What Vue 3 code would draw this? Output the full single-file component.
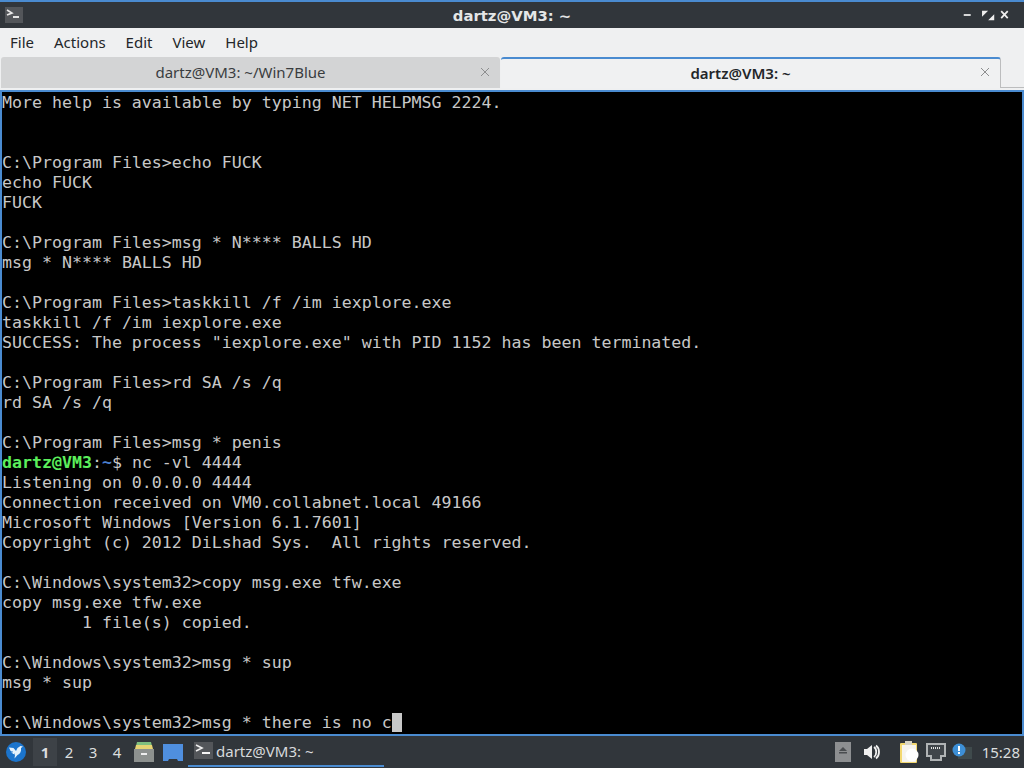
<script setup>
const before = [
  'More help is available by typing NET HELPMSG 2224.', '', '',
  'C:\\Program Files>echo FUCK', 'echo FUCK', 'FUCK', '',
  'C:\\Program Files>msg * N**** BALLS HD', 'msg * N**** BALLS HD', '',
  'C:\\Program Files>taskkill /f /im iexplore.exe', 'taskkill /f /im iexplore.exe',
  'SUCCESS: The process "iexplore.exe" with PID 1152 has been terminated.', '',
  'C:\\Program Files>rd SA /s /q', 'rd SA /s /q', '',
  'C:\\Program Files>msg * penis'
]
const after = [
  'Listening on 0.0.0.0 4444',
  'Connection received on VM0.collabnet.local 49166',
  'Microsoft Windows [Version 6.1.7601]',
  'Copyright (c) 2012 DiLshad Sys.  All rights reserved.', '',
  'C:\\Windows\\system32>copy msg.exe tfw.exe', 'copy msg.exe tfw.exe',
  '        1 file(s) copied.', '',
  'C:\\Windows\\system32>msg * sup', 'msg * sup', ''
]
const menus = ['File', 'Actions', 'Edit', 'View', 'Help']
const desktops = ['1', '2', '3', '4']
</script>

<template>
  <div class="window">
    <header class="titlebar">
      <div class="title-left">
        <div class="app-icon">
          <svg width="16" height="14" viewBox="0 0 16 14"><path d="M1 2l5 3-5 2" fill="none" stroke="#e8e8e8" stroke-width="1.6"/><path d="M7 9h6" stroke="#f4f4f4" stroke-width="1.8"/></svg>
        </div>
      </div>
      <div class="title">dartz@VM3: ~</div>
      <div class="controls">
        <svg width="62" height="16" viewBox="0 0 62 16">
          <path d="M2 8h8" stroke="#eee" stroke-width="2"/>
          <path d="M23 3h7l-7 7zM37 14h-7l7-7z" fill="#eee"/>
          <path d="M45 3.500l7.500 8M52.500 3.500l-7.500 8" stroke="#eee" stroke-width="2"/>
        </svg>
      </div>
    </header>

    <nav class="menubar">
      <span v-for="m in menus" :key="m" class="menu">{{ m }}</span>
    </nav>

    <div class="tabs">
      <div class="tab inactive">
        <span class="tab-label">dartz@VM3: ~/Win7Blue</span>
        <svg class="tab-x" width="10" height="10" viewBox="0 0 10 10"><path d="M1 1l8 8M9 1l-8 8" stroke="#8d8e8f" stroke-width="1"/></svg>
      </div>
      <div class="tab active">
        <span class="tab-label">dartz@VM3: ~</span>
        <svg class="tab-x" width="10" height="10" viewBox="0 0 10 10"><path d="M1 1l8 8M9 1l-8 8" stroke="#8d8e8f" stroke-width="1"/></svg>
      </div>
      <div class="tab-rest"></div>
    </div>

    <main class="terminal">
      <div v-for="(l, i) in before" :key="'b' + i" class="line">{{ l }}</div>
      <div class="line"><span class="green">dartz@VM3</span><span>:</span><span class="blue">~</span>$ nc -vl 4444</div>
      <div v-for="(l, i) in after" :key="'a' + i" class="line">{{ l }}</div>
      <div class="line">C:\Windows\system32&gt;msg * there is no c<span class="cursor"></span></div>
    </main>

    <footer class="taskbar">
      <div class="start">
        <svg width="20" height="20" viewBox="0 0 20 20">
          <circle cx="10" cy="10" r="10" fill="#1b74cc"/>
          <path d="M3 5.500l4.500.5 2.500 3 1.500-3 3-2 2.500.5-2 1.500c.5 3.500-1 6-3.500 7l-3 3.500.5-3.500C6.500 12 4.500 9.500 3 5.500z" fill="#e4f1fb"/>
          <path d="M4 9.500l3 .5M6 13l3-1" stroke="#1b74cc" stroke-width=".8"/>
        </svg>
      </div>
      <div class="desktops">
        <span v-for="(d, i) in desktops" :key="d" class="desk" :class="{ current: i === 0 }">{{ d }}</span>
      </div>
      <svg class="launcher" width="22" height="22" viewBox="0 0 22 22">
        <path d="M4 1h14l1 4H3z" fill="#7fbf7f"/>
        <path d="M3 4h16l1 4H2z" fill="#e6d473"/>
        <rect x="1" y="8" width="20" height="13" fill="#8d918f"/>
        <rect x="8" y="12" width="6" height="2" fill="#eee"/>
      </svg>
      <svg class="launcher desk-icon" width="20" height="17" viewBox="0 0 20 17">
        <path d="M0 0h20v17h-5l-1-2H6l-1 2H0z" fill="#4f8fdf"/>
      </svg>
      <div class="task">
        <div class="task-icon">
          <svg width="19" height="17" viewBox="0 0 19 17"><path d="M2 3l6 3-6 3" fill="none" stroke="#eee" stroke-width="1.600"/><path d="M8 11h8" stroke="#f4f4f4" stroke-width="2"/></svg>
        </div>
        <span class="task-label">dartz@VM3: ~</span>
      </div>
      <div class="spacer"></div>
      <div class="tray">
        <div class="eject">
          <svg width="16" height="20" viewBox="0 0 16 20"><path d="M8 5l4 4H4z" fill="#4a4d50"/><rect x="4" y="10" width="8" height="1.500" fill="#4a4d50"/></svg>
        </div>
        <svg class="vol" width="18" height="16" viewBox="0 0 18 16">
          <path d="M1 5h3l5-4v14l-5-4H1z" fill="#f0f0f0"/>
          <path d="M11 3c3 2 3 8 0 10M13 1.500c4 3 4 10 0 13" fill="none" stroke="#f0f0f0" stroke-width="1.800"/>
        </svg>
        <svg class="clip" width="20" height="24" viewBox="0 0 20 24">
          <rect x="1" y="3" width="17" height="20" rx="1" fill="#f3d870"/>
          <rect x="3" y="5" width="14" height="17" fill="#f6f4ee"/>
          <rect x="6" y="1" width="7" height="4" fill="#d8d4c4"/>
          <circle cx="13" cy="15" r="6.500" fill="#fff"/>
        </svg>
        <svg class="net" width="20" height="18" viewBox="0 0 20 18">
          <path d="M1 1h18v12h-4v4H5v-4H1z" fill="#40454a" stroke="#b0b3b5" stroke-width="2"/>
          <path d="M5 5h10" stroke="#e4e4e4" stroke-width="2" stroke-dasharray="1 1"/>
        </svg>
        <svg class="notif" width="20" height="18" viewBox="0 0 20 18">
          <rect x="6" y="4" width="14" height="12" fill="#3f4a4c"/>
          <circle cx="7" cy="7" r="6.500" fill="#3d8fd6"/>
          <rect x="6" y="3" width="2" height="5" fill="#fff"/>
          <rect x="6" y="9" width="2" height="2" fill="#fff"/>
        </svg>
        <span class="clock">15:28</span>
      </div>
    </footer>
  </div>
</template>

<style>
html, body { margin: 0; background: #000; }
</style>

<style scoped>
.window {
  width: 1024px;
  height: 768px;
  display: flex;
  flex-direction: column;
  overflow: hidden;
  font-family: "Noto Sans", sans-serif;
  font-size: 15px;
}
.titlebar {
  height: 26px;
  flex: none;
  border-top: 2px solid #4a8bd0;
  background: #31363b;
  display: grid;
  grid-template-columns: 1fr auto 1fr;
  align-items: center;
}
.app-icon {
  width: 18px;
  height: 16px;
  margin-left: 5px;
  background: #53565a;
  display: flex;
  align-items: center;
  justify-content: center;
}
.title {
  text-align: center;
  color: #e4e6e7;
  font-weight: 700;
  font-family: "DejaVu Sans", sans-serif;
  font-size: 14.800px;
}
.controls {
  justify-self: end;
  margin-right: 8px;
  width: 54px;
  display: flex;
}
.menubar {
  height: 29px;
  flex: none;
  background: #eff0f1;
  display: flex;
  align-items: center;
  padding-bottom: 2px;
  box-sizing: border-box;
  color: #232629;
}
.menu { padding: 0 10px; }
.tabs {
  height: 33px;
  flex: none;
  display: flex;
  background: #eff0f1;
}
.tab {
  display: flex;
  align-items: center;
  justify-content: center;
  position: relative;
  box-sizing: border-box;
  padding-right: 20px;
  padding-bottom: 2px;
  color: #3a3d40;
}
.tab.inactive {
  width: 499px;
  margin-left: 1px;
  background: #d3d4d5;
  border-radius: 3px 3px 0 0;
  height: 31px;
}
.tab.active {
  width: 500px;
  margin-left: 1px;
  background: #f0f1f2;
  border-top: 2px solid #4a8bd0;
  border-right: 1px solid #bcbdbe;
  border-radius: 3px 3px 0 0;
  height: 31px;
  color: #232629;
  font-weight: 600;
}
.tab-x {
  position: absolute;
  right: 10px;
  top: 10px;
}
.tab.active .tab-x { top: 8px; }
.tab-rest {
  flex: 1;
  height: 31px;
  border-bottom: 1px solid #bcbdbe;
  box-sizing: border-box;
}
.terminal {
  flex: 1;
  min-height: 0;
  background: #000;
  border: 2px solid #4a8bd0;
  color: #c8c8c8;
  font-family: "DejaVu Sans Mono", monospace;
  font-size: 16.600px;
  overflow: hidden;
}
.line {
  height: 20px;
  line-height: 22px;
  white-space: pre;
}
.green { color: #5cf05c; font-weight: 700; }
.blue { color: #4a7fd0; font-weight: 700; }
.cursor {
  display: inline-block;
  width: 10px;
  height: 19px;
  background: #c8c8c8;
  vertical-align: -4px;
}
.taskbar {
  height: 32px;
  flex: none;
  background: #31363b;
  display: flex;
  align-items: center;
  color: #dcdedf;
}
.start { margin-left: 6px; width: 20px; height: 20px; }
.desktops { display: flex; margin-left: 7px; }
.desk {
  width: 24px;
  height: 28px;
  line-height: 28px;
  text-align: center;
  box-sizing: border-box;
}
.desk.current { background: #3d4247; font-weight: 700; }
.launcher { margin-left: 4px; flex: none; }
.launcher.desk-icon { margin-left: 8px; }
.task {
  height: 31px;
  width: 196px;
  align-self: flex-start;
  margin-left: 5px;
  padding-left: 6px;
  box-sizing: border-box;
  display: flex;
  align-items: center;
  gap: 3px;
  border-bottom: 2px solid #4a8bd0;
}
.task-icon {
  width: 19px;
  height: 17px;
  background: #53565a;
  display: flex;
}
.task-label { color: #d8dadb; }
.spacer { flex: 1; }
.tray {
  display: flex;
  align-items: center;
  height: 32px;
}
.eject {
  width: 16px;
  height: 20px;
  background: #8d8f91;
}
.vol { margin-left: 12px; }
.clip { margin-left: 18px; }
.net { margin-left: 7px; }
.notif { margin-left: 6px; }
.clock { margin: 0 4px 0 10px; color: #dcdedf; }
</style>
